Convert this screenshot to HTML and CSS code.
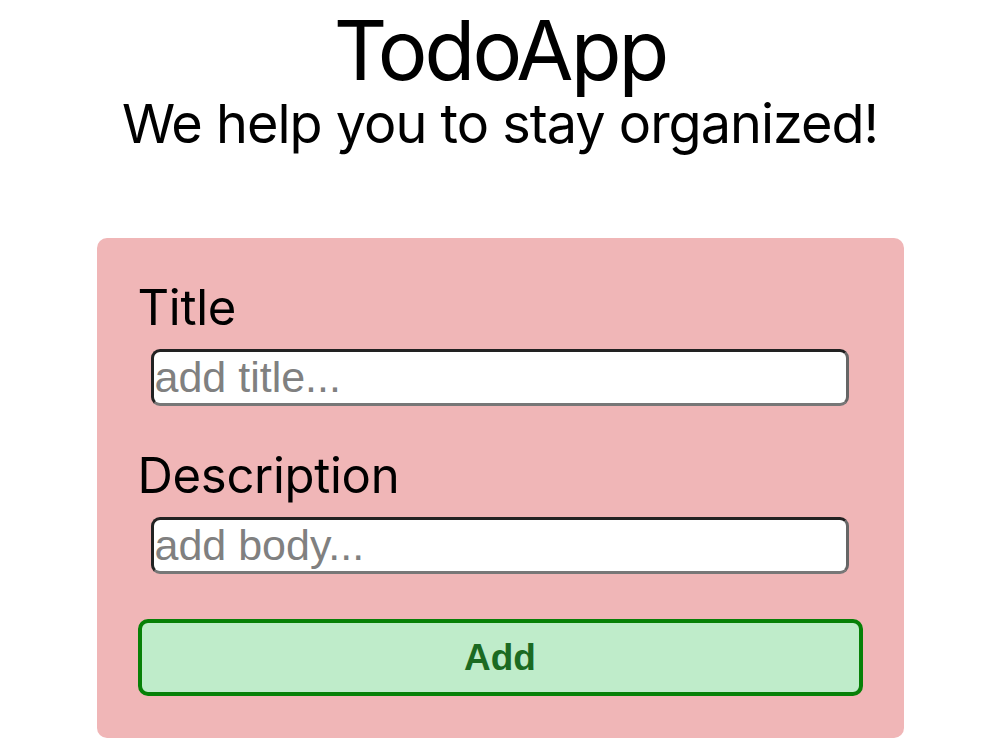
FILE: index.html
```html
<!DOCTYPE html>
<html lang="en">
<head>
    <meta charset="UTF-8">
    <meta name="viewport" content="width=device-width, initial-scale=1.0">
    <title>TodoApp</title>
    <link rel="stylesheet" href="styles.css">
</head>
<body>
    <!-- Cabeçalho -->
    <header class="cabecalho">
        <h1>TodoApp</h1>
        <p>We help you to stay organized!</p>
    </header>

    <!-- Formulario para nova tarefa -->
    <form class="form-todo">
        <label for="titulo">Title</label>
        <input type="text" id="titulo" placeholder="add title...">

        <label for="descricao">Description</label>
        <input type="text" id="descricao" placeholder="add body...">

        <button type="button" class="botao-add">Add</button>
    </form>
</body>
</html>
```

FILE: styles.css
```css
* {
  margin: 0;
  padding: 0;
  box-sizing: border-box;
}

body {
  font-family: 'Inter', 'Noto Sans', sans-serif;
  background-color: white;
  color: #000;
  display: flex;
  flex-direction: column;
  align-items: center;
}

.cabecalho {
  text-align: center;
}

.cabecalho h1 {
  font-size: 83px;
  font-weight: 400;
  line-height: 100px;
  letter-spacing: -3px;
}

.cabecalho p {
  margin-top: -8px;
  font-size: 54px;
  line-height: 64px;
  letter-spacing: -1px;
}

.form-todo {
  margin-top: 82px;
  width: 807px;
  background-color: #f0b6b7;
  border-radius: 10px;
  padding: 40px 41px 42px;
  display: flex;
  flex-direction: column;
}

.form-todo label {
  font-size: 49px;
  line-height: 60px;
  letter-spacing: -0.3px;
  margin-bottom: 11px;
}

.form-todo input {
  margin: 0 14px 40px 13px;
  height: 57px;
  border-radius: 9px;
  border: 3px solid #444;
  border-top-color: #222;
  border-left-color: #222;
  border-right-color: #666;
  border-bottom-color: #777;
  background: white;
  font-family: 'Liberation Sans', Arial, sans-serif;
  font-size: 43px;
  padding: 0 1px;
}

.form-todo input:last-of-type {
  margin-bottom: 45px;
}

.form-todo input::placeholder {
  color: #808080;
}

.botao-add {
  height: 77px;
  background-color: #bfecca;
  border: 4px solid #078007;
  border-radius: 10px;
  font-family: 'Liberation Sans', Arial, sans-serif;
  font-weight: bold;
  font-size: 37px;
  color: #1b6a22;
}
```
